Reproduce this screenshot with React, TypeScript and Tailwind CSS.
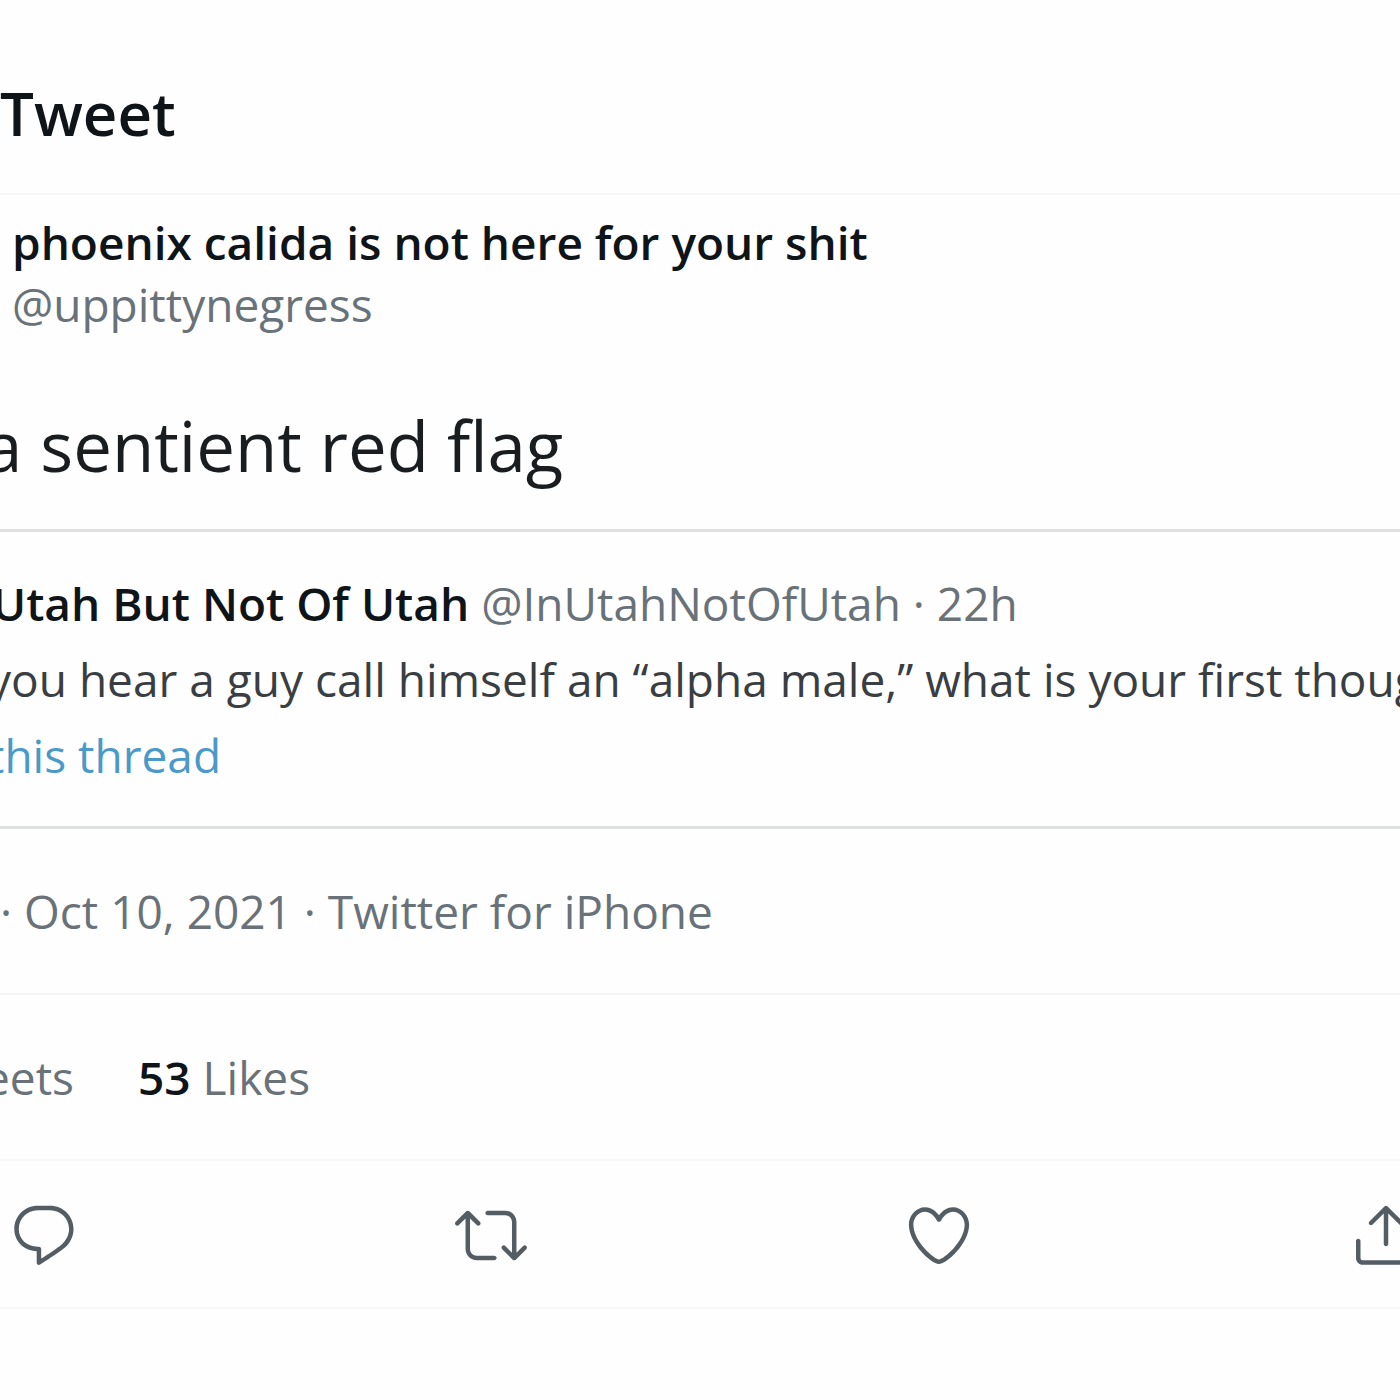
import type { ReactNode } from 'react';

interface Action {
  label: string;
  paths: string[];
}

const actions: Action[] = [
  {
    label: 'Reply',
    paths: [
      'M14.046 2.242l-4.148-.01h-.002c-4.374 0-7.8 3.427-7.8 7.802 0 4.098 3.186 7.206 7.465 7.37v3.828c0 .108.044.286.12.403.142.225.384.347.632.347.138 0 .277-.038.402-.118.264-.168 6.473-4.14 8.088-5.506 1.902-1.61 3.04-3.97 3.043-6.312v-.017c-.006-4.367-3.43-7.787-7.8-7.788zm3.787 12.972c-1.134.96-4.862 3.405-6.772 4.643V16.67c0-.414-.335-.75-.75-.75h-.396c-3.66 0-6.318-2.476-6.318-5.886 0-3.534 2.768-6.302 6.3-6.302l4.147.01h.002c3.532 0 6.3 2.766 6.302 6.296-.003 1.91-.942 3.844-2.514 5.176z',
    ],
  },
  {
    label: 'Retweet',
    paths: [
      'M23.77 15.67c-.292-.293-.767-.293-1.06 0l-2.22 2.22V7.65c0-2.068-1.683-3.75-3.75-3.75h-5.85c-.414 0-.75.336-.75.75s.336.75.75.75h5.85c1.24 0 2.25 1.01 2.25 2.25v10.24l-2.22-2.22c-.293-.293-.768-.293-1.06 0s-.294.768 0 1.06l3.5 3.5c.145.147.337.22.53.22s.383-.072.53-.22l3.5-3.5c.294-.292.294-.767 0-1.06zm-10.66 3.28H7.26c-1.24 0-2.25-1.01-2.25-2.25V6.46l2.22 2.22c.148.147.34.22.532.22s.384-.073.53-.22c.293-.293.293-.768 0-1.06l-3.5-3.5c-.293-.294-.768-.294-1.06 0l-3.5 3.5c-.294.292-.294.767 0 1.06s.767.293 1.06 0l2.22-2.22V16.7c0 2.068 1.683 3.75 3.75 3.75h5.85c.414 0 .75-.336.75-.75s-.337-.75-.75-.75z',
    ],
  },
  {
    label: 'Like',
    paths: [
      'M12 21.638h-.014C9.403 21.59 1.95 14.856 1.95 8.478c0-3.064 2.525-5.754 5.403-5.754 2.29 0 3.83 1.58 4.646 2.73.814-1.148 2.354-2.73 4.645-2.73 2.88 0 5.404 2.69 5.404 5.755 0 6.376-7.454 13.11-10.037 13.157H12zM7.354 4.225c-2.08 0-3.903 1.988-3.903 4.255 0 5.74 7.034 11.596 8.55 11.658 1.518-.062 8.55-5.917 8.55-11.658 0-2.267-1.823-4.255-3.903-4.255-2.528 0-3.94 2.936-3.952 2.965-.23.562-1.156.562-1.387 0-.014-.03-1.425-2.965-3.954-2.965z',
    ],
  },
  {
    label: 'Share',
    paths: [
      'M17.53 7.47l-5-5c-.293-.293-.768-.293-1.06 0l-5 5c-.294.293-.294.768 0 1.06s.767.294 1.06 0l3.72-3.72V15c0 .414.336.75.75.75s.75-.336.75-.75V4.81l3.72 3.72c.146.147.338.22.53.22s.384-.072.53-.22c.293-.293.293-.767 0-1.06z',
      'M19.708 21.944H4.292C3.028 21.944 2 20.916 2 19.652V14c0-.414.336-.75.75-.75s.75.336.75.75v5.652c0 .437.355.792.792.792h15.416c.437 0 .792-.355.792-.792V14c0-.414.336-.75.75-.75s.75.336.75.75v5.652c0 1.264-1.028 2.292-2.292 2.292z',
    ],
  },
];

function Name({ children }: { children: ReactNode }) {
  return <span className="font-semibold text-[#0f1419]">{children}</span>;
}

export default function App() {
  return (
    <main className="min-h-screen overflow-hidden bg-[#fefefe] font-['Open_Sans',sans-serif] text-[46px] leading-[62px] whitespace-nowrap text-[#697279]">
      <header className="border-b-2 border-[#f6f7f7] pt-[73px] pb-10">
        <h1 className="text-[60px] leading-[80px] font-semibold text-[#0f1419]">Tweet</h1>
      </header>

      <article>
        {/* Author */}
        <div className="flex flex-col px-3 pt-4">
          <Name>phoenix calida is not here for your shit</Name>
          <a href="#profile">@uppittynegress</a>
        </div>

        <p className="-ml-4 pt-16 pb-[38px] text-[69px] leading-[92px] text-[#1a1d20]">a sentient red flag</p>

        {/* Quoted tweet */}
        <section className="border-y-3 border-[#dfe0e0] pt-10 pb-10">
          <div className="-ml-2 flex gap-3">
            <Name>Utah But Not Of Utah</Name>
            <span>@InUtahNotOfUtah · 22h</span>
          </div>
          <p className="-ml-3 pt-[14px] text-[#3a3e42]">you hear a guy call himself an “alpha male,” what is your first thoug</p>
          <a href="#thread" className="-ml-3 block pt-[14px] text-[#4a99c9]">this thread</a>
        </section>

        <p className="border-b-2 border-[#f3f4f4] py-[51px]">· Oct 10, 2021 · Twitter for iPhone</p>

        {/* Counts */}
        <div className="-ml-4 flex gap-16 border-b-2 border-[#f6f7f7] py-[51px]">
          <a href="#retweets">eets</a>
          <a href="#likes">
            <Name>53</Name> Likes
          </a>
        </div>

        <div className="-mr-[22px] flex justify-between border-b-2 border-[#f6f7f7] pt-[38px] pb-[36px] pl-2">
          {actions.map((action) => (
            <button key={action.label} type="button" aria-label={action.label}>
              <svg viewBox="0 0 24 24" className="size-[72px] fill-[#555d64]">
                {action.paths.map((d) => (
                  <path key={d} d={d} />
                ))}
              </svg>
            </button>
          ))}
        </div>
      </article>
    </main>
  );
}
